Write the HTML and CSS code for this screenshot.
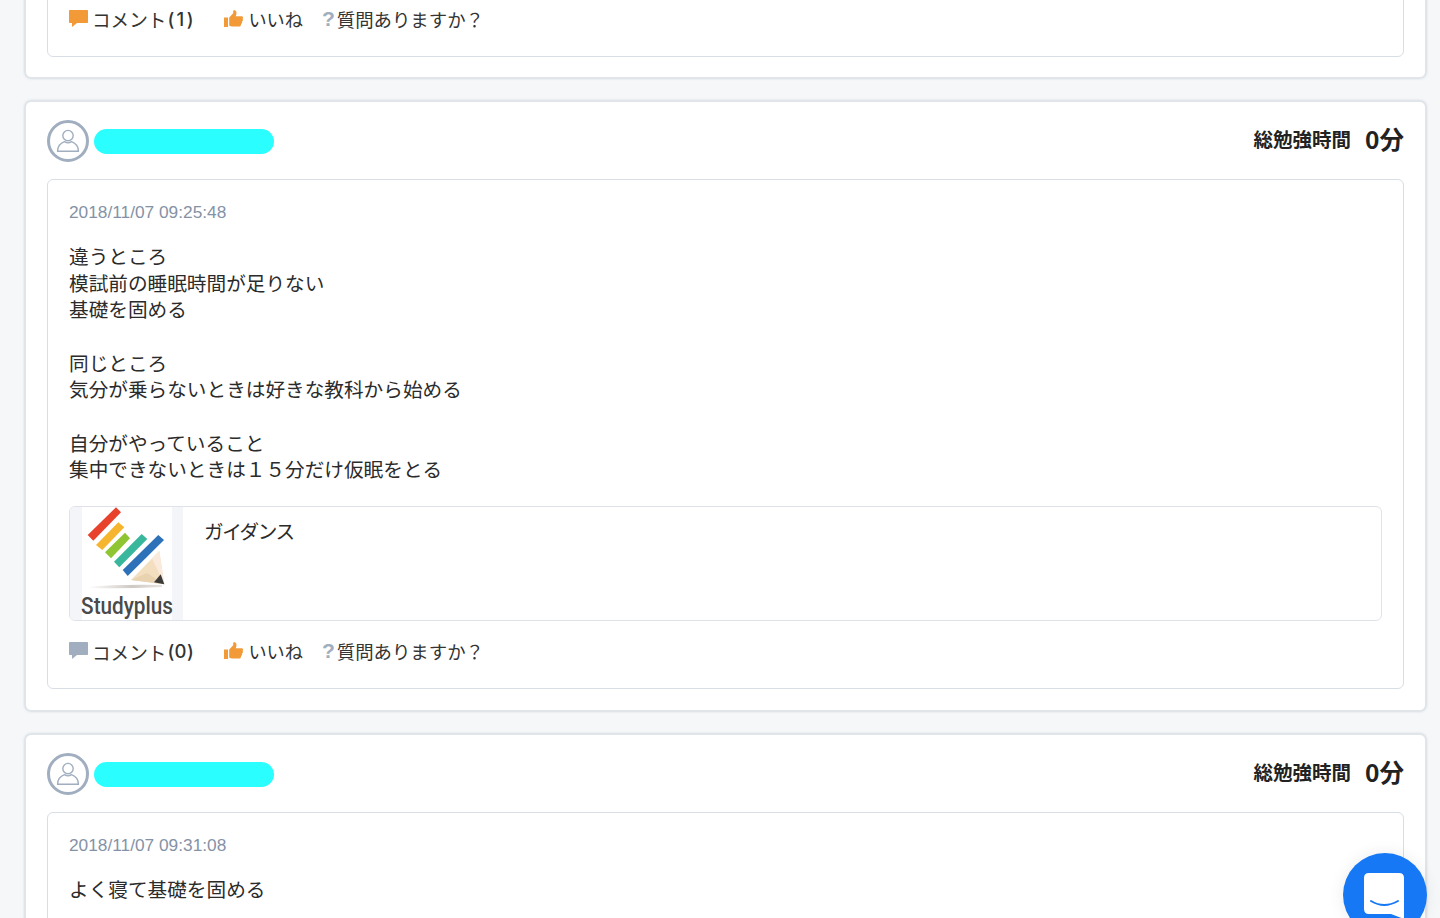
FILE: index.html
```html
<!DOCTYPE html>
<html lang="ja">
<head>
<meta charset="utf-8">
<title>Studyplus</title>
<link rel="stylesheet" href="styles.css">
</head>
<body>
<main class="feed">
  <article class="card card-cut">
    <div class="post post-cut">
      <div class="actions">
        <span class="action"><svg class="ic-comment orange" viewBox="0 0 19 17"><path d="M0.8 0H18.2Q19 0 19 .8V12.2Q19 13 18.2 13H8L3 17V13H.8Q0 13 0 12.2V.8Q0 0 .8 0Z"/></svg>コメント<b class="count count-one">(1)</b></span>
        <span class="action like"><svg class="ic-like" viewBox="0 0 19 17"><path d="M0 7.5H4V17H0ZM5.2 7.6 9.2 3.2V0.8C9.2 0 11.6-.3 12.2 1.6 12.8 3.4 12.2 5 11.7 6.2H17.4C19.2 6.2 19.4 8.2 18.6 8.8 19.2 9.8 18.9 11 18 11.5 18.4 12.6 18 13.6 17 14 17.3 15.4 16.4 16.6 15 16.6H9.2C7.4 16.6 6.4 15.9 5.2 15.4Z"/></svg>いいね</span>
        <span class="action ask"><span class="q">?</span>質問ありますか？</span>
      </div>
    </div>
  </article>

  <article class="card">
    <header class="card-head">
      <div class="user">
        <svg class="avatar" viewBox="0 0 42 42"><circle cx="21" cy="21" r="19.5"/><circle cx="21" cy="15.6" r="5.2"/><path d="M10.6 31.3C10.6 25.5 15 22.6 17.5 21.7 19.5 23 22.5 23 24.5 21.7 27 22.6 31.4 25.5 31.4 31.3Z"/></svg>
        <span class="name-mask"></span>
      </div>
      <div class="total"><span class="total-label">総勉強時間</span><span class="total-value">0分</span></div>
    </header>
    <div class="post">
      <time class="date">2018/11/07 09:25:48</time>
      <p class="body">違うところ
模試前の睡眠時間が足りない
基礎を固める

同じところ
気分が乗らないときは好きな教科から始める

自分がやっていること
集中できないときは１５分だけ仮眠をとる</p>
      <div class="material">
        <div class="thumb">
          <div class="logo">
            <svg class="logo-mark" viewBox="0 0 90 84">
              <defs><linearGradient id="sh" x1="0" x2="1" y1="0" y2="0"><stop offset="0" stop-color="#fff"/><stop offset=".6" stop-color="#cfc9c4"/><stop offset="1" stop-color="#e8e4e0"/></linearGradient></defs>
              <path fill="url(#sh)" d="M5 80Q40 77 80 78V80Q40 82 5 81Z"/>
              <path fill="#e8412c" d="M5.7 28 34 .3 39 5.3 11.3 33.7Z"/>
              <path fill="#f6b52e" d="M14 38 36.3 15.3 42.3 20.3 20.3 43Z"/>
              <path fill="#8fc433" d="M23 45.3 43 25.7 48 31.3 29 51.3Z"/>
              <path fill="#38b79c" d="M32 54.7 59.7 27 65.3 32 37.3 60.3Z"/>
              <path fill="#2d72b8" d="M40.7 63 76.3 28 82 33 45.7 69Z"/>
              <path fill="#f3dfc0" d="M49 73 77.3 44 82.3 77.3Z"/>
              <path fill="#faeadb" d="M70 51 77.3 44 82.3 77.3Z"/>
              <path fill="#e8d2b0" d="M49 73 65 66 82.3 77.3Z"/>
              <path fill="#3a3a3a" d="M72 75.3 78.7 67.3 82.3 77.3Z"/>
            </svg>
            <span class="logo-text">Studyplus</span>
          </div>
        </div>
        <div class="material-title">ガイダンス</div>
      </div>
      <div class="actions">
        <span class="action"><svg class="ic-comment gray" viewBox="0 0 19 17"><path d="M0.8 0H18.2Q19 0 19 .8V12.2Q19 13 18.2 13H8L3 17V13H.8Q0 13 0 12.2V.8Q0 0 .8 0Z"/></svg>コメント<b class="count">(0)</b></span>
        <span class="action like"><svg class="ic-like" viewBox="0 0 19 17"><path d="M0 7.5H4V17H0ZM5.2 7.6 9.2 3.2V0.8C9.2 0 11.6-.3 12.2 1.6 12.8 3.4 12.2 5 11.7 6.2H17.4C19.2 6.2 19.4 8.2 18.6 8.8 19.2 9.8 18.9 11 18 11.5 18.4 12.6 18 13.6 17 14 17.3 15.4 16.4 16.6 15 16.6H9.2C7.4 16.6 6.4 15.9 5.2 15.4Z"/></svg>いいね</span>
        <span class="action ask"><span class="q">?</span>質問ありますか？</span>
      </div>
    </div>
  </article>

  <article class="card">
    <header class="card-head">
      <div class="user">
        <svg class="avatar" viewBox="0 0 42 42"><circle cx="21" cy="21" r="19.5"/><circle cx="21" cy="15.6" r="5.2"/><path d="M10.6 31.3C10.6 25.5 15 22.6 17.5 21.7 19.5 23 22.5 23 24.5 21.7 27 22.6 31.4 25.5 31.4 31.3Z"/></svg>
        <span class="name-mask"></span>
      </div>
      <div class="total"><span class="total-label">総勉強時間</span><span class="total-value">0分</span></div>
    </header>
    <div class="post">
      <time class="date">2018/11/07 09:31:08</time>
      <p class="body">よく寝て基礎を固める</p>
    </div>
  </article>
</main>
<button class="chat" type="button" aria-label="チャット">
  <svg viewBox="0 0 40 46"><path fill="#fff" d="M5 0H35Q40 0 40 5V46L27 41H5Q0 41 0 36V5Q0 0 5 0Z"/><path fill="none" stroke="#1678f5" stroke-width="2" stroke-linecap="round" d="M7 28Q20 36 34 28"/></svg>
</button>
</body>
</html>
```
FILE: styles.css
```css
* { box-sizing: border-box; }
html, body { margin: 0; height: 918px; overflow: hidden; background: #f5f7f9; }
body {
  font-family: "Noto Sans CJK JP", "Liberation Sans", sans-serif;
  color: #2b2b2b;
}
.feed {
  display: flex;
  flex-direction: column;
  gap: 23px;
  width: 1401px;
  margin-left: 25px;
  margin-top: -60px;
}
.card {
  background: #fff;
  border: 1px solid #e0e5ea;
  border-radius: 6px;
  box-shadow: 0 0 3px rgba(120, 135, 155, .45);
  padding: 18px 21px 21px;
}
.card-cut { height: 138px; padding-top: 0; }
.card-head {
  display: flex;
  align-items: center;
  justify-content: space-between;
  height: 42px;
  margin-bottom: 17px;
}
.user { display: flex; align-items: center; gap: 5px; }
.avatar { width: 42px; height: 42px; fill: none; stroke: #a0aec0; }
.avatar circle, .avatar path { stroke-width: 1.4; }
.avatar circle:first-child { stroke-width: 3; }
.name-mask { width: 180px; height: 25px; border-radius: 13px; background: #2bfeff; }
.total { display: flex; align-items: center; gap: 14px; margin-top: -5px; font-weight: 700; color: #222; }
.total-label { font-size: 19.5px; line-height: 26px; }
.total-value { font-size: 24.5px; line-height: 28px; }
.post {
  border: 1.5px solid #d8dee6;
  border-radius: 6px;
  padding: 21px 21px 24px;
}
.post-cut { height: 116px; padding-top: 63.5px; padding-bottom: 0; }
.date {
  display: block;
  font-family: "Liberation Sans", sans-serif;
  font-size: 17.3px;
  line-height: 22px;
  color: #8492a6;
}
.body {
  margin: 20px 0 23px;
  font-size: 19.65px;
  line-height: 26.67px;
  white-space: pre-line;
  color: #2b2b2b;
}
.material {
  display: flex;
  height: 115px;
  border: 1.5px solid #dfe3e9;
  border-radius: 6px;
  overflow: hidden;
}
.thumb {
  width: 113px;
  flex: none;
  background: #f3f5f8;
  padding: 0 11px 0 12px;
}
.logo {
  width: 90px;
  height: 100%;
  background: #fff;
  display: flex;
  flex-direction: column;
  align-items: center;
}
.logo-mark { width: 90px; height: 84px; flex: none; }
.logo-text {
  font-family: Roboto, "Liberation Sans", sans-serif;
  font-size: 23px;
  line-height: 32px;
  font-weight: 500;
  color: #4a4a4a;
  white-space: nowrap;
  transform: scaleX(.9);
}
.material-title {
  margin: 11px 0 0 21px;
  font-size: 19.6px;
  line-height: 26px;
  letter-spacing: -1.4px;
}
.actions {
  display: flex;
  align-items: center;
  height: 26px;
  margin-top: 17px;
  font-size: 18.6px;
  color: #333;
}
.post-cut .actions { margin-top: 0; }
.action { display: flex; align-items: center; white-space: nowrap; }
.like { margin-left: 31px; font-size: 18.2px; }
.ask { margin-left: 19px; font-size: 18.4px; }
.ic-comment { width: 19px; height: 17px; margin-right: 4px; margin-top: -1px; flex: none; }
.orange { fill: #f39a38; }
.gray { fill: #a0aec0; }
.ic-like { width: 19px; height: 17px; margin-right: 5px; margin-top: -1px; fill: #f39a38; flex: none; }
.count {
  width: 26px;
  margin-left: 1px;
  font-family: "Inter", sans-serif;
  font-size: 18.5px;
  font-weight: 500;
  letter-spacing: .4px;
}
.count-one { letter-spacing: 2.4px; }
.q {
  font-family: "Liberation Sans", sans-serif;
  font-weight: 700;
  font-size: 21px;
  color: #a0aec0;
  margin-right: 2px;
}
.chat {
  position: fixed;
  left: 1343px;
  top: 853px;
  width: 84px;
  height: 84px;
  border: 0;
  padding: 20px 0 0 21px;
  border-radius: 50%;
  background: #1678f5;
  box-shadow: 0 0 16px rgba(0, 0, 0, .08);
  display: flex;
  align-items: flex-start;
}
.chat svg { display: block; width: 40px; height: 46px; }
```
